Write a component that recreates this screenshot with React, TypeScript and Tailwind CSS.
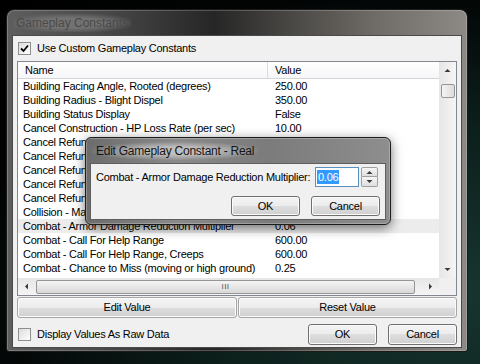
import React from 'react';

const rows: [string, string][] = [
  ['Building Facing Angle, Rooted (degrees)', '250.00'],
  ['Building Radius - Blight Dispel', '350.00'],
  ['Building Status Display', 'False'],
  ['Cancel Construction - HP Loss Rate (per sec)', '10.00'],
  ['Cancel Refund Rate - Gold (Building)', '0.75'],
  ['Cancel Refund Rate - Lumber (Building)', '0.75'],
  ['Cancel Refund Rate - Gold (Research)', '1.00'],
  ['Cancel Refund Rate - Lumber (Research)', '1.00'],
  ['Cancel Refund Rate - Gold (Unit)', '1.00'],
  ['Collision - Max. Size', '200.00'],
  ['Combat - Armor Damage Reduction Multiplier', '0.06'],
  ['Combat - Call For Help Range', '600.00'],
  ['Combat - Call For Help Range, Creeps', '600.00'],
  ['Combat - Chance to Miss (moving or high ground)', '0.25'],
  ['Combat - Damage Bonus Table - Chaos', '1.00,1.00,1.00,1.00,1.00,1.00,1.00'],
];

const btn =
  'flex items-center justify-center rounded-[3px] border border-[#707070] bg-[linear-gradient(to_bottom,#f4f4f4_0%,#ececec_50%,#dedede_50%,#d0d0d0_100%)] shadow-[inset_0_0_0_1px_#fbfbfb] text-black';

function Checkbox({ checked }: { checked?: boolean }) {
  return (
    <span className="relative flex h-[13px] w-[13px] shrink-0 items-center justify-center border border-[#8e8f8f] bg-[linear-gradient(135deg,#dcdcdc,#ffffff)]">
      {checked && (
        <svg width="9" height="9" viewBox="0 0 9 9">
          <path d="M1 4.5 L3.5 7 L8 1.5" fill="none" stroke="#000" strokeWidth="1.8" />
        </svg>
      )}
    </span>
  );
}

function Arrow({ dir }: { dir: 'up' | 'down' | 'left' | 'right' }) {
  const d = {
    up: 'M0.5 4 L3.5 1 L6.5 4 Z',
    down: 'M0.5 1 L3.5 4 L6.5 1 Z',
    left: 'M4 0.5 L1 3.5 L4 6.5 Z',
    right: 'M1 0.5 L4 3.5 L1 6.5 Z',
  }[dir];
  const vertical = dir === 'up' || dir === 'down';
  return (
    <svg width={vertical ? 7 : 5} height={vertical ? 5 : 7} viewBox={vertical ? '0 0 7 5' : '0 0 5 7'}>
      <path d={d} fill="#3a3a3a" />
    </svg>
  );
}

function EditDialog() {
  return (
    <div className="absolute left-[85px] top-[137px] w-[306px] rounded-[6px] border border-[#1c1c1c] bg-[linear-gradient(to_right,#6c6c6c_0%,#8a8a8a_30%,#7b7b7b_60%,#8e8e8e_100%)] px-[4px] pb-[4px] shadow-[0_3px_12px_rgba(0,0,0,0.55),inset_0_0_0_1px_rgba(255,255,255,0.25)]">
      <div className="flex h-[25px] items-center pl-[2px]">
        <span className="rounded-[8px] bg-[radial-gradient(ellipse_at_center,rgba(235,235,235,0.55)_30%,rgba(235,235,235,0)_75%)] px-[4px] text-[12px] text-[#151515]">
          Edit Gameplay Constant - Real
        </span>
      </div>
      <div className="flex h-[57px] flex-col border border-[#5e5e5e] bg-[#f0f0f0]">
        <div className="flex items-center pl-[5px] pr-[7px] pt-[3px]">
          <span>Combat - Armor Damage Reduction Multiplier:</span>
          <div className="ml-auto flex h-[20px] w-[44px] items-center border border-[#5a8fc0] bg-white pl-[1px]">
            <span className="bg-[#3399ff] px-[1px] leading-[14px] text-white">0.06</span>
          </div>
          <div className="ml-[2px] flex h-[20px] w-[17px] flex-col">
            <span className="flex h-[10px] items-center justify-center rounded-t-[2px] border border-[#a0a0a0] bg-[linear-gradient(to_bottom,#f6f6f6,#dedede)]">
              <Arrow dir="up" />
            </span>
            <span className="flex h-[10px] items-center justify-center rounded-b-[2px] border border-t-0 border-[#a0a0a0] bg-[linear-gradient(to_bottom,#f6f6f6,#dedede)]">
              <Arrow dir="down" />
            </span>
          </div>
        </div>
        <div className="mt-[9px] flex justify-end gap-[11px] pr-[5px]">
          <button className={`${btn} h-[20px] w-[69px]`}>OK</button>
          <button className={`${btn} h-[20px] w-[69px]`}>Cancel</button>
        </div>
      </div>
    </div>
  );
}

export default function App() {
  return (
    <div className="relative h-[364px] w-[480px] overflow-hidden bg-[radial-gradient(ellipse_at_95%_80%,#17352f_0%,#0c1f1b_40%,#020404_75%,#000_100%)] pl-[6px] pt-[9px] font-['Liberation_Sans',Arial,sans-serif] text-[11px] tracking-[-0.25px] text-black">
      <div className="flex h-[343px] w-[462px] flex-col rounded-t-[8px] rounded-b-[3px] border border-[#1a1a1a] bg-[linear-gradient(to_right,#5e5e5e_0%,#4a4a4a_20%,#262626_45%,#4a4845_62%,#6f6b66_80%,#8d8a86_100%)] px-[5px] pb-[3px] shadow-[inset_0_0_0_1px_rgba(255,255,255,0.2)]">
        <div className="flex h-[25px] items-center pl-[1px]">
          <span className="rounded-[8px] bg-[radial-gradient(ellipse_at_center,rgba(125,125,125,0.75)_40%,rgba(125,125,125,0)_80%)] px-[3px] text-[12px] tracking-normal text-[#4a4a4a]">
            Gameplay Constants
          </span>
        </div>
        <div className="flex flex-1 flex-col border border-[#4a4a4a] bg-[#f0f0f0]">
          <label className="ml-[5px] mt-[5px] flex h-[14px] items-center gap-[6px]">
            <Checkbox checked />
            <span>Use Custom Gameplay Constants</span>
          </label>

          <div className="ml-[4px] mt-[6px] flex h-[235px] w-[440px] flex-col border border-[#828790] bg-white">
            <div className="flex h-[216px]">
              <div className="flex w-[421px] flex-col overflow-hidden">
                <div className="flex h-[17px] shrink-0 items-center border-b border-[#d5d5d5] bg-[linear-gradient(to_bottom,#ffffff,#f6f7f9)]">
                  <span className="w-[250px] border-r border-[#dcdcdc] pl-[7px]">Name</span>
                  <span className="pl-[7px]">Value</span>
                </div>
                {rows.map(([name, value], i) => (
                  <div
                    key={name}
                    className={`flex h-[14px] shrink-0 items-center whitespace-nowrap ${i === 10 ? 'bg-[#ececec]' : ''}`}
                  >
                    <span className="w-[250px] shrink-0 overflow-hidden pl-[5px]">{name}</span>
                    <span className="pl-[7px]">{value}</span>
                  </div>
                ))}
              </div>
              <div className="flex w-[17px] flex-col items-center bg-[linear-gradient(to_right,#e6e6e6,#f5f5f5)]">
                <span className="flex h-[17px] w-full items-center justify-center">
                  <Arrow dir="up" />
                </span>
                <span className="mt-[5px] h-[14px] w-[14px] rounded-[2px] border border-[#959595] bg-[linear-gradient(to_right,#f4f4f4,#dcdcdc)]" />
                <span className="mt-auto flex h-[17px] w-full items-center justify-center">
                  <Arrow dir="down" />
                </span>
              </div>
            </div>
            <div className="flex h-[17px]">
              <div className="flex w-[421px] items-center bg-[linear-gradient(to_bottom,#e6e6e6,#f5f5f5)]">
                <span className="flex w-[17px] items-center justify-center">
                  <Arrow dir="left" />
                </span>
                <span className="ml-[1px] flex h-[14px] w-[379px] items-center justify-center rounded-[2px] border border-[#959595] bg-[linear-gradient(to_bottom,#f4f4f4,#d8d8d8)] text-[8px] tracking-[0.5px] text-[#555]">
                  III
                </span>
                <span className="ml-auto flex w-[17px] items-center justify-center">
                  <Arrow dir="right" />
                </span>
              </div>
              <div className="w-[17px] bg-[#f0f0f0]" />
            </div>
          </div>

          <div className="ml-[4px] mt-[1px] flex w-[440px] gap-[1px]">
            <button className={`${btn} h-[21px] w-[220px] rounded-[2px] border-[#a6a6a6]`}>Edit Value</button>
            <button className={`${btn} h-[21px] w-[219px] rounded-[2px] border-[#a6a6a6]`}>Reset Value</button>
          </div>

          <div className="mt-[6px] flex h-[21px] items-center pl-[5px] pr-[4px]">
            <label className="flex items-center gap-[6px]">
              <Checkbox />
              <span>Display Values As Raw Data</span>
            </label>
            <button className={`${btn} ml-auto h-[21px] w-[69px]`}>OK</button>
            <button className={`${btn} ml-[11px] h-[21px] w-[69px]`}>Cancel</button>
          </div>
        </div>
      </div>
      <EditDialog />
    </div>
  );
}
